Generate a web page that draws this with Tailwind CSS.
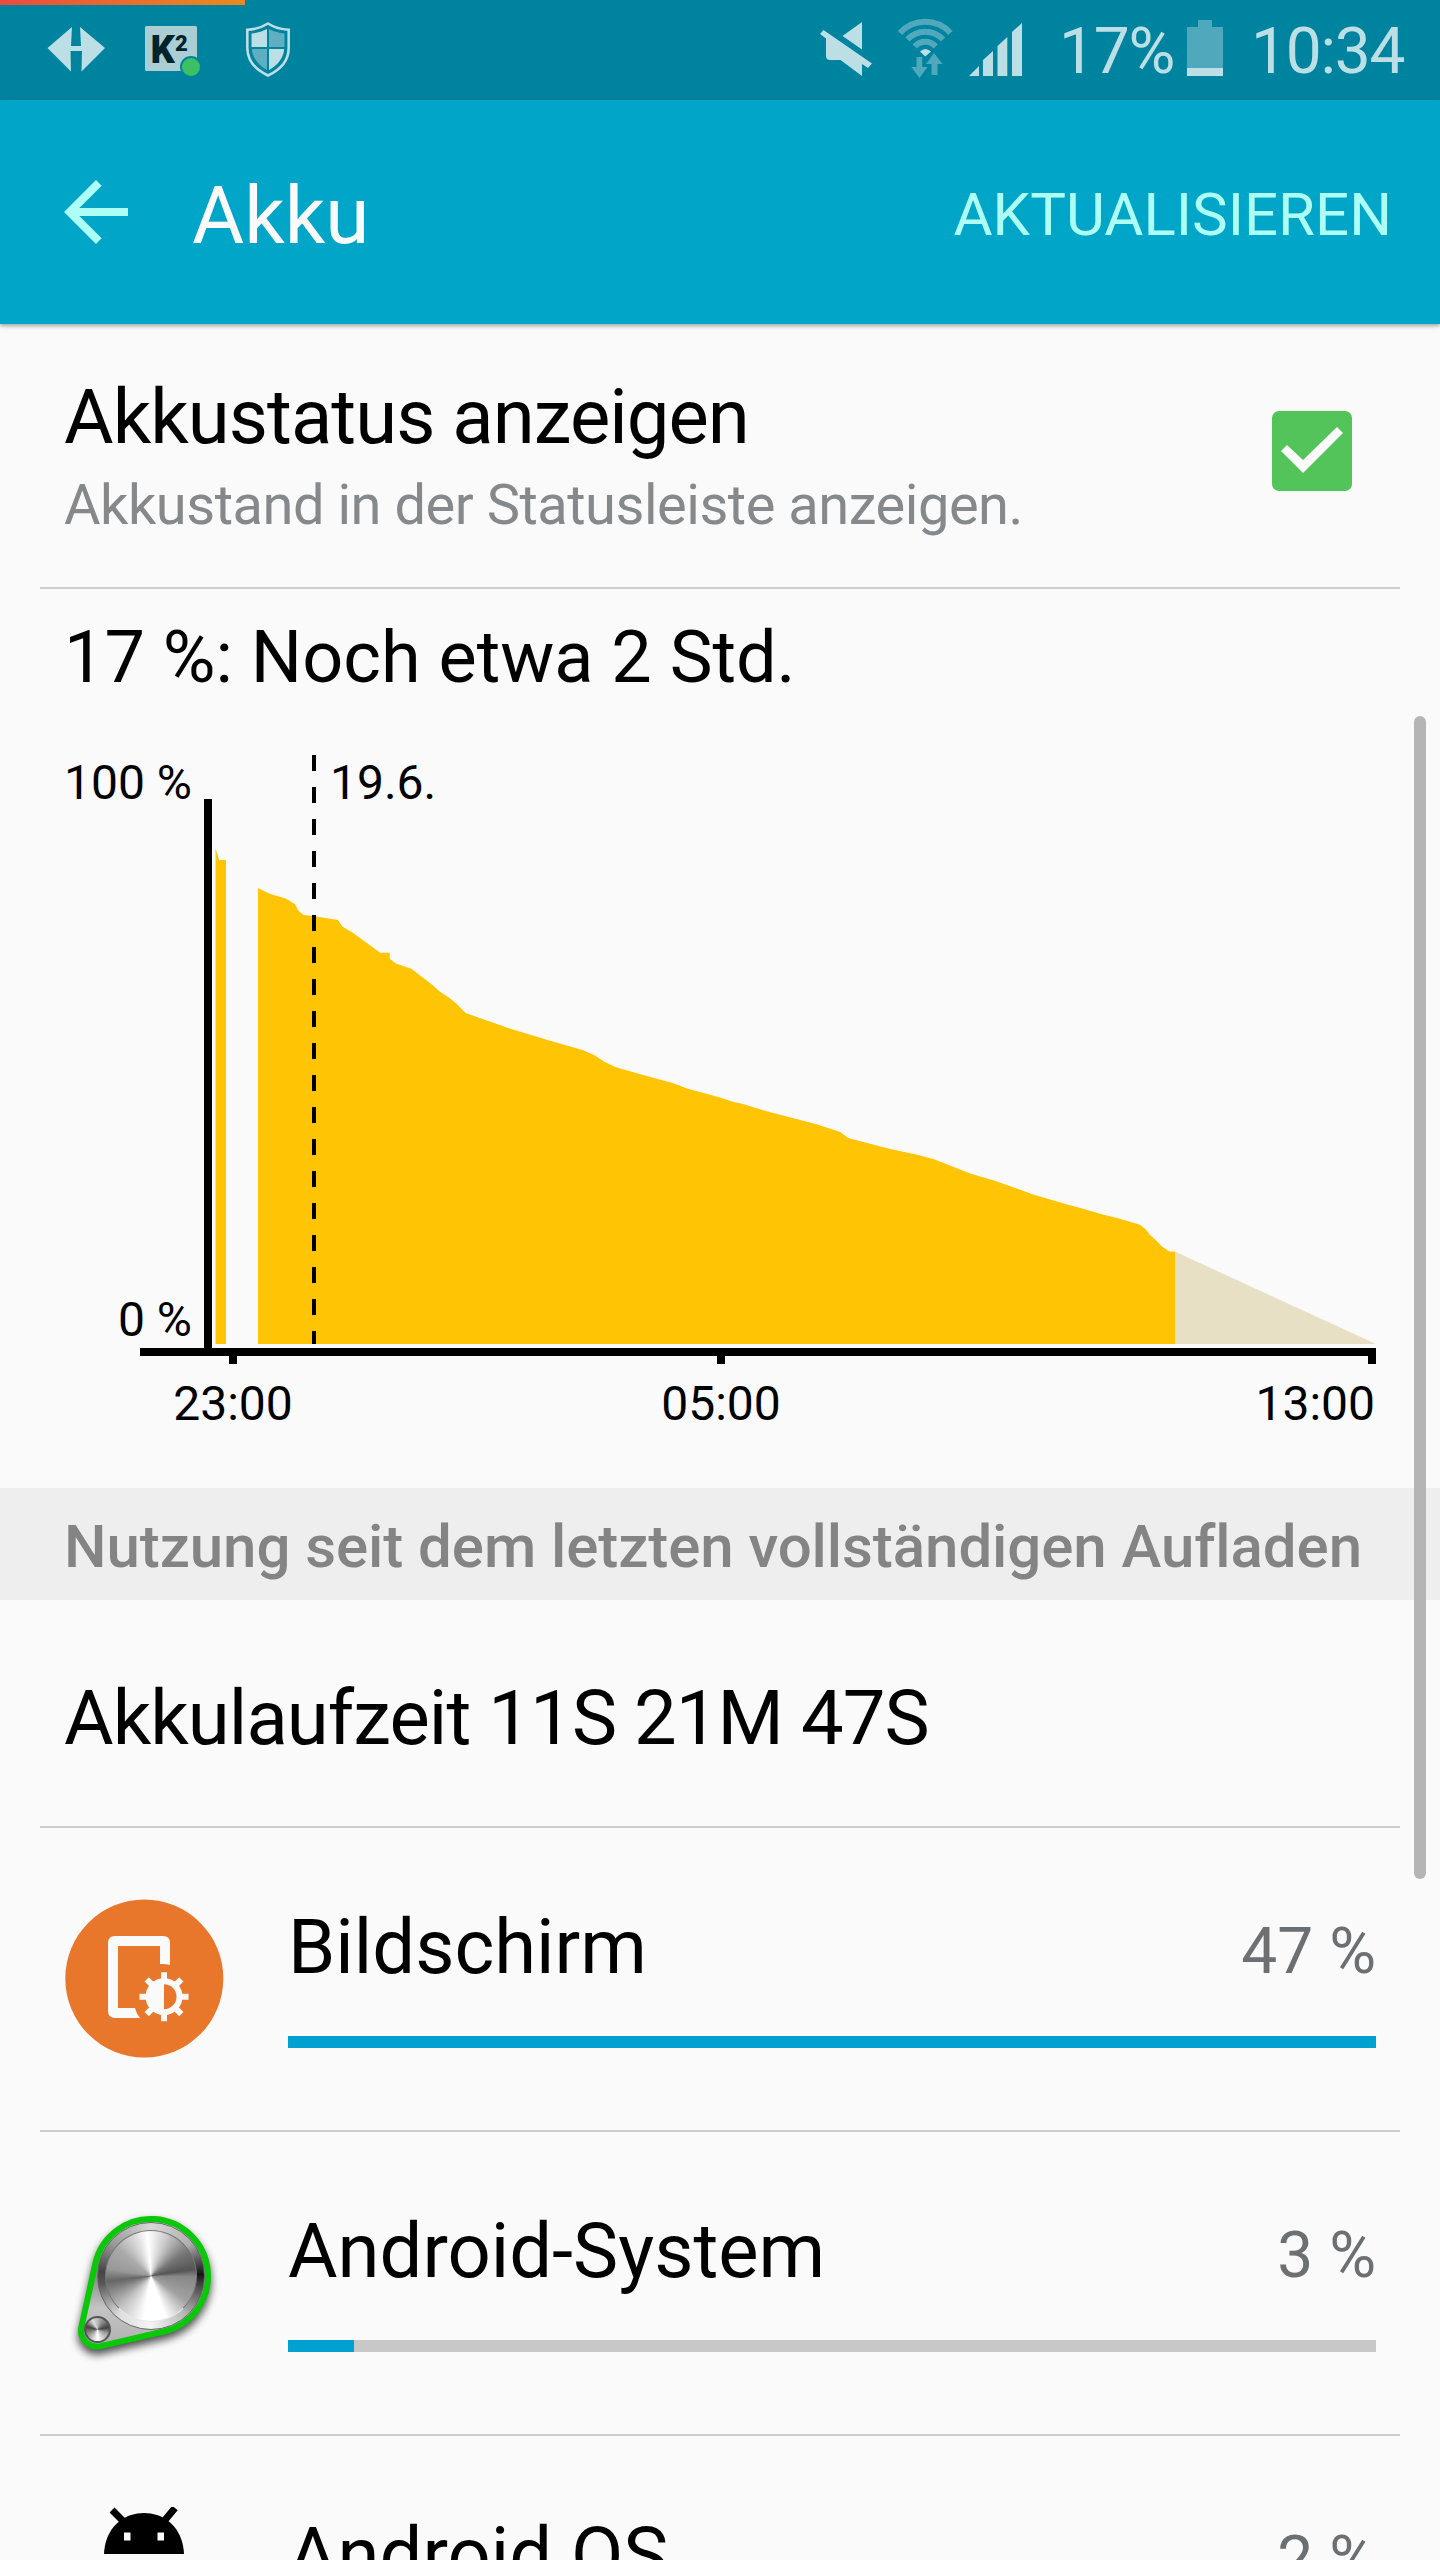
<!DOCTYPE html>
<html lang="de">
<head>
    <meta charset="UTF-8">
    <meta name="viewport" content="width=device-width, initial-scale=1.0">
    <title>Akku</title>
    <script src="https://cdn.jsdelivr.net/npm/@tailwindcss/browser@4"></script>
</head>
<body class="bg-[#fafafa]">
    <div class="relative w-[1440px] h-[2560px] overflow-hidden bg-[#fafafa] text-black font-[Roboto,sans-serif]">

        <!-- Status bar -->
        <div class="h-[100px] bg-[#00839e] flex">
            <svg class="w-[810px] h-[100px] shrink-0" viewBox="0 0 810 100">
                <defs>
                    <linearGradient id="loading" x1="0" x2="1" y1="0" y2="0">
                        <stop offset="0" stop-color="#e84c3d"/>
                        <stop offset="1" stop-color="#e88c1e"/>
                    </linearGradient>
                </defs>
                <rect width="245" height="5" fill="url(#loading)"/>
                <path d="M47.500 48L72 27L71 46H81L80 27L105 48L81.500 71.500L82 51H70.500L71 71.500Z" fill="#bcdfe5"/>
                <rect x="145" y="26" width="52" height="45" rx="1.500" fill="#abcdd4"/>
                <text x="150.500" y="62.500" font-size="38" font-weight="900" fill="#00242b">K</text>
                <text x="175" y="50.500" font-size="22" font-weight="900" fill="#00242b">2</text>
                <circle cx="191" cy="67" r="11" fill="#00839e"/>
                <circle cx="191" cy="67" r="9" fill="#3dbf63"/>
                <path d="M268 23.500C261 28 254 29.500 247.300 29.700V48C247.500 62 256 70 268 75.500C280 70 288.500 62 288.700 48V29.700C282 29.500 275 28 268 23.500Z" fill="none" stroke="#bcdfe5" stroke-width="2.600"/>
                <path d="M267 29V47H251.500V33.500C257 33 262 31.500 267 29ZM269 49H284.200C283.500 59 277 65.500 269 70Z" fill="#bcdfe5"/>
                <path d="M269 29V47H284.500V33.500C279 33 274 31.500 269 29ZM267 49H251.800C252.500 59 259 65.500 267 70Z" fill="#5eafc1"/>
            </svg>
            <svg class="w-[225px] h-[100px] shrink-0" viewBox="810 0 225 100">
                <!-- sound off -->
                <path d="M862 22V49.500L842.500 36ZM823.500 30L872 63.500L868 68L862 64V76L840.500 60H830Q826 60 826 56V38.500L820 34Z" fill="#bcdfe5"/>
                <!-- wifi -->
                <g fill="none" stroke="#4fa8bb" stroke-width="6">
                    <path d="M900 33A34 34 0 0 1 950.500 33"/>
                    <path d="M907.500 39.500A24 24 0 0 1 943 39.500"/>
                    <path d="M914.800 46.500A14 14 0 0 1 935.700 46.500"/>
                </g>
                <path d="M920 51.500Q925.300 46.500 931 51.500L925.300 56.500Z" fill="#bcdfe5"/>
                <path d="M916.500 57H922.300V67H927.500L919.500 78L911.300 67H916.500ZM931.500 75V64H926L934 53L942.500 64H937.500V75Z" fill="#4fa8bb"/>
                <!-- signal -->
                <path d="M969 76L979 66V76ZM983 76V60L993 51V76ZM997.500 76V46L1007.300 37V76ZM1012 76V32L1022 23V76Z" fill="#bcdfe5"/>
            </svg>
            <div class="flex-1 flex items-center pt-1 pl-6 text-[64px] leading-none tracking-[-1.2px] text-[#bcdfe5]">
                <span class="w-[128px]">17%</span>
                <svg class="w-9 h-[56px] mb-2" viewBox="0 0 36 56">
                    <path d="M11 0H25V7H36V48H0V7H11Z" fill="#4fa8bb"/>
                    <path d="M0 48H36V56H0Z" fill="#bcdfe5"/>
                </svg>
                <span class="pl-7">10:34</span>
            </div>
        </div>

        <!-- Action bar -->
        <div class="h-[224px] bg-[#00a5c7] flex items-center justify-between pl-12 pr-12 shadow-[0_2px_4px_rgba(0,0,0,0.35)]">
            <div class="flex items-center">
                <svg class="size-24" viewBox="0 0 24 24">
                    <path d="M20 11H7.830l5.590-5.590L12 4l-8 8 8 8 1.410-1.410L7.830 13H20v-2z" fill="#adfff5"/>
                </svg>
                <h1 class="pl-12 pt-2 text-[80px] leading-none text-[#fafafa]">Akku</h1>
            </div>
            <span class="pt-[5px] text-[60px] leading-none text-[#adfff5]">AKTUALISIEREN</span>
        </div>

        <!-- Show battery status -->
        <div class="h-[263px] flex items-start justify-between pl-16 pr-[88px]">
            <div class="pt-[49px]">
                <div class="text-[76px] leading-[88px] tracking-[-0.95px]">Akkustatus anzeigen</div>
                <div class="mt-3 text-[56px] leading-[64px] tracking-[-0.48px] text-[#86898b]">Akkustand in der Statusleiste anzeigen.</div>
            </div>
            <svg class="size-20 mt-[87px]" viewBox="0 0 80 80">
                <rect width="80" height="80" rx="7" fill="#53c45a"/>
                <path d="M15 34L31 49L65 16L71 22L31 62L9 40Z" fill="#fafafa"/>
            </svg>
        </div>
        <div class="h-0.5 mx-10 bg-[#cccccc]"></div>

        <!-- Battery chart -->
        <h2 class="pt-[30px] pl-16 text-[72px] leading-[78px]">17 %: Noch etwa 2 Std.</h2>
        <svg class="block w-[1440px] h-[791px]" viewBox="0 697 1440 791" font-size="48">
            <path d="M215.500 1344V848L219 860H226V1344Z" fill="#ffc403"/>
            <path d="M258 1344V888L269.500 893.700L285.600 898.400L294.800 904L298.500 910.700L303.500 915L314 916.300L338 920L342.500 926.700L351.700 932L380.200 952.700H389.800V958.800L395.800 963.500L411.400 968.700L431.600 984.300L439 990.900L449.500 998L457.300 1004.600L465.600 1013L509.700 1028.600L551 1041L583.200 1050.300L595 1055.500L604.300 1061.700L615.300 1066.900L647.400 1076.300L672.700 1082.900L687 1088.600L720 1097.500L733.800 1102L743 1104L765 1110.800L816.400 1124.200L840.300 1132L848.100 1138L890 1149L917.400 1154.800L934 1159.300L970.300 1173.400L995.500 1181L1034 1194.800L1069 1205L1080.500 1207.900L1103.400 1214.800L1117.200 1217.900L1140 1224.800L1145.700 1229.200L1149.800 1234.700L1157 1241.300L1161.300 1246L1169.500 1251.600H1175V1344Z" fill="#ffc403"/>
            <path d="M1175 1344V1251.600L1376 1344Z" fill="#e8e0c5"/>
            <path d="M314 755V1344" stroke="#000" stroke-width="4" stroke-dasharray="16 16"/>
            <path d="M204 799H212V1348H1376V1364H1368V1356H725V1364H717V1356H237V1364H229V1356H140V1348H204Z"/>
            <text x="192" y="799" text-anchor="end">100 %</text>
            <text x="192" y="1336" text-anchor="end">0 %</text>
            <text x="330" y="799">19.6.</text>
            <text x="233" y="1420" text-anchor="middle">23:00</text>
            <text x="721" y="1420" text-anchor="middle">05:00</text>
            <text x="1375" y="1420" text-anchor="end">13:00</text>
        </svg>

        <!-- Usage header -->
        <div class="h-[112px] flex items-center pt-[5px] pl-16 bg-[#eeeeee] text-[60px] leading-none tracking-[-0.07px] [font-variant-ligatures:none] font-medium text-[#848484] whitespace-nowrap">Nutzung seit dem letzten vollständigen Aufladen</div>
        <div class="h-[226px] flex items-center pt-[10px] pl-16 text-[76px] leading-none tracking-[-0.92px]">Akkulaufzeit 11S 21M 47S</div>
        <div class="h-0.5 mx-10 bg-[#cccccc]"></div>

        <!-- Usage list -->
        <div class="h-[302px] flex pl-16 pr-16">
            <svg class="size-40 mt-[71px] shrink-0" viewBox="64 1899 160 160">
                <circle cx="144.300" cy="1978.500" r="79" fill="#e8762b"/>
                <path d="M160 1964V1946H118V2008H135Q136 2013 140 2018H115Q108 2018 108 2011V1943Q108 1936 115 1936H163Q170 1936 170 1943V1965Q165 1963.500 160 1964Z" fill="#fafafa"/>
                <g transform="translate(164 1996.700)" fill="#fafafa">
                    <circle r="18.500"/>
                    <path d="M-3 -24.500H3V24.500H-3Z"/>
                    <path d="M-3 -24.500H3V24.500H-3Z" transform="rotate(45)"/>
                    <path d="M-3 -24.500H3V24.500H-3Z" transform="rotate(90)"/>
                    <path d="M-3 -24.500H3V24.500H-3Z" transform="rotate(135)"/>
                    <path d="M0 -12.500A12.500 12.500 0 0 1 0 12.500Z" fill="#e8762b"/>
                </g>
            </svg>
            <div class="flex-1 pl-16 pt-[75px]">
                <div class="h-[88px] flex items-baseline justify-between">
                    <span class="text-[76px] leading-[88px]">Bildschirm</span>
                    <span class="text-[64px] leading-none text-[#6d7072]">47 %</span>
                </div>
                <div class="mt-[45px] h-3 bg-[#c8c8c8]"><div class="h-full bg-[#00a0d0]" style="width: 100%"></div></div>
            </div>
        </div>
        <div class="h-0.5 mx-10 bg-[#cccccc]"></div>

        <div class="h-[302px] flex pl-16 pr-16">
            <div class="relative size-40 mt-[71px] shrink-0">
                <svg class="size-40 overflow-visible" viewBox="0 0 160 160">
                    <defs>
                        <linearGradient id="plate" x1="0" x2="0" y1="0" y2="1">
                            <stop offset="0" stop-color="#d8d8d8"/>
                            <stop offset="0.450" stop-color="#8a8a8a"/>
                            <stop offset="0.700" stop-color="#c4c4c4"/>
                            <stop offset="1" stop-color="#b0b0b0"/>
                        </linearGradient>
                        <filter id="soft" x="-20%" y="-20%" width="140%" height="140%">
                            <feGaussianBlur stdDeviation="4.500"/>
                        </filter>
                    </defs>
                    <path d="M17.400 124.100L31.300 60.700A57 57 0 1 1 99.800 128.500L36.600 143.100A16 16 0 0 1 17.400 124.100Z" transform="translate(0 5)" fill="#000" stroke="#000" stroke-width="6" opacity="0.700" filter="url(#soft)"/>
                    <path d="M17.400 124.100L31.300 60.700A57 57 0 1 1 99.800 128.500L36.600 143.100A16 16 0 0 1 17.400 124.100Z" fill="url(#plate)" stroke="#08c808" stroke-width="6"/>
                </svg>
                <!-- large pulley rim and face -->
                <div class="absolute left-[33px] top-[19px] size-[108px] rounded-full border border-[#666666] bg-[conic-gradient(#d8d8d8_0deg,#b0b0b0_50deg,#151515_88deg,#444444_100deg,#bbbbbb_140deg,#f4f4f4_180deg,#dddddd_220deg,#555555_262deg,#444444_275deg,#999999_310deg,#d8d8d8_360deg)]"></div>
                <div class="absolute left-[41px] top-[27px] size-[92px] rounded-full border border-[#777777] border-b-[#e8e8e8] bg-[conic-gradient(from_-5deg,#ffffff_0deg,#c8c8c8_28deg,#777777_60deg,#555555_86deg,#888888_96deg,#a0a0a0_130deg,#ffffff_165deg,#ffffff_195deg,#c0c0c0_230deg,#666666_268deg,#999999_285deg,#aaaaaa_315deg,#e0e0e0_345deg,#ffffff_360deg)]"></div>
                <div class="absolute left-[20px] top-[113px] size-[27px] rounded-full border-2 border-[#555555] bg-[conic-gradient(#bbbbbb_0deg,#444444_80deg,#999999_110deg,#ffffff_180deg,#888888_250deg,#444444_285deg,#dddddd_330deg,#bbbbbb_360deg)]"></div>
            </div>
            <div class="flex-1 pl-16 pt-[75px]">
                <div class="h-[88px] flex items-baseline justify-between">
                    <span class="text-[76px] leading-[88px]">Android-System</span>
                    <span class="text-[64px] leading-none text-[#6d7072]">3 %</span>
                </div>
                <div class="mt-[45px] h-3 bg-[#c8c8c8]"><div class="h-full bg-[#00a0d0]" style="width: 6.070%"></div></div>
            </div>
        </div>
        <div class="h-0.5 mx-10 bg-[#cccccc]"></div>

        <div class="h-[302px] flex pl-16 pr-16">
            <svg class="size-40 mt-[71px] shrink-0" viewBox="0 0 160 160">
                <path d="M40 47C41 22 58 6 80 6S119 22 120 47Z"/>
                <path d="M48 3L60 15M111 1L101 13" stroke="#000" stroke-width="7"/>
                <path d="M60 25.500H66.500V33.500H60ZM93.500 25.500H100V33.500H93.500Z" fill="#fafafa"/>
            </svg>
            <div class="flex-1 pl-16 pt-[75px]">
                <div class="h-[88px] flex items-baseline justify-between">
                    <span class="text-[76px] leading-[88px]">Android OS</span>
                    <span class="text-[64px] leading-none text-[#6d7072]">2 %</span>
                </div>
            </div>
        </div>

        <!-- Scrollbar -->
        <div class="absolute left-[1414px] top-[716px] w-3 h-[1163px] rounded-full bg-[#b4b5b6]"></div>
    </div>
</body>
</html>
